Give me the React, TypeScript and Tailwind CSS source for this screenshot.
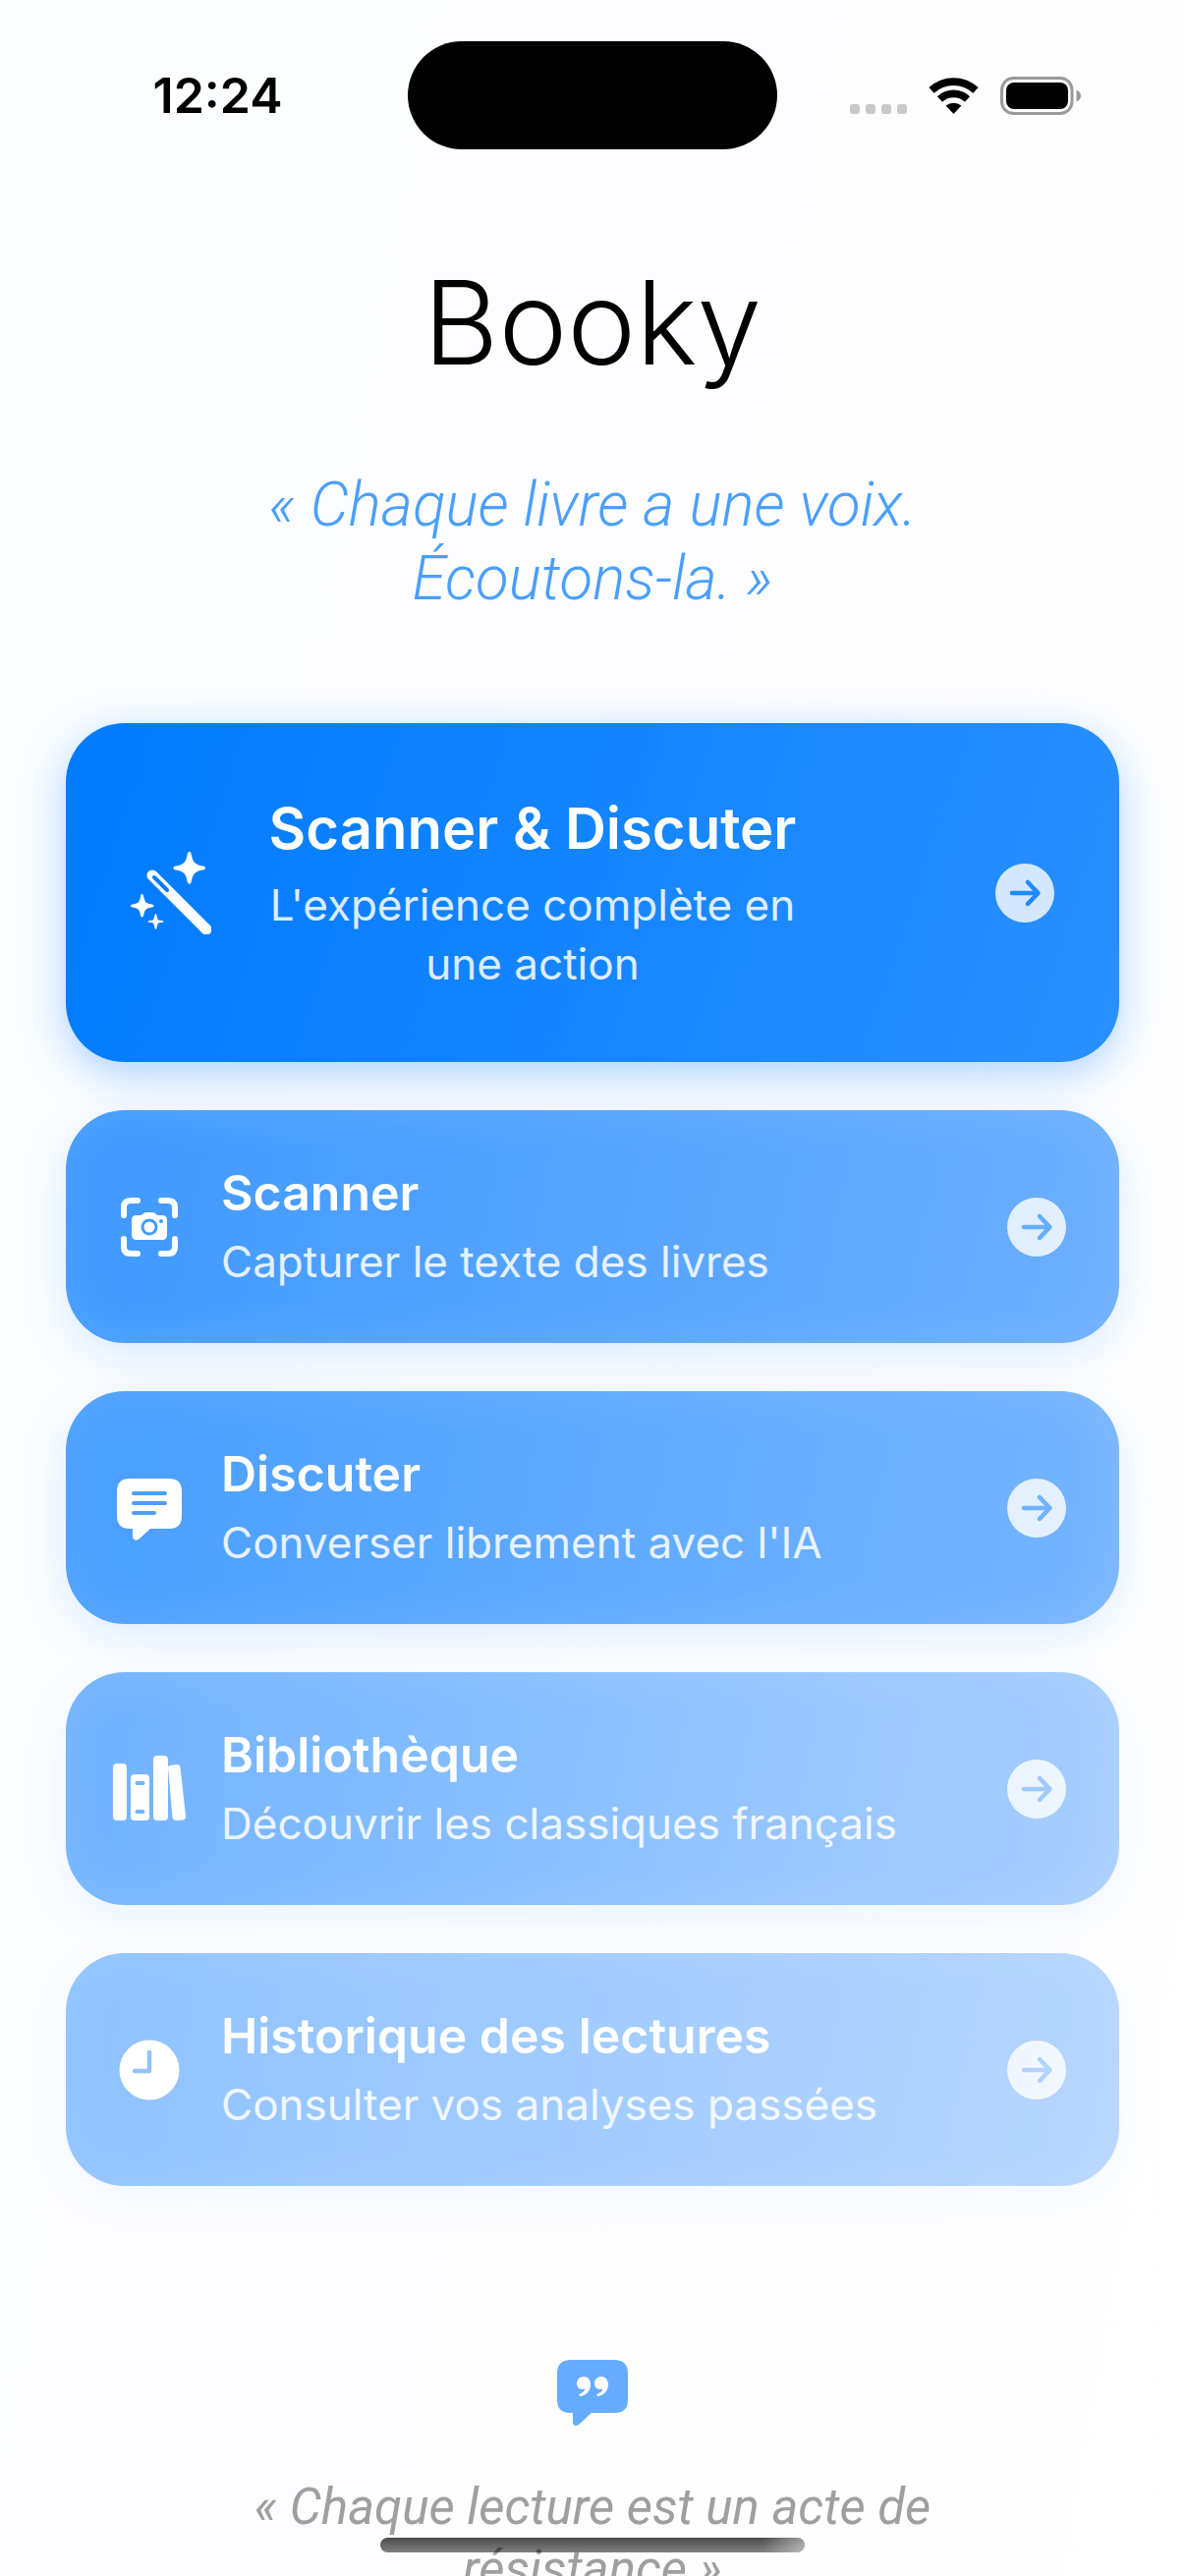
import React from 'react';

type IconProps = { className?: string };

interface MenuItem {
  title: string;
  subtitle: string;
  icon: React.ReactElement;
  tone: string;
  hole: string;
}

function WandIcon({ className }: IconProps) {
  return (
    <svg viewBox="0 0 82 84" className={className} fill="currentColor" aria-hidden="true">
      <path d="M22 24 L77 79" stroke="currentColor" strokeWidth="11" strokeLinecap="round" />
      <path d="M24 26 L37 39" stroke="#007bff" strokeWidth="4" strokeLinecap="round" />
      <path d="M59.700 0 C61 0 61.500 1 61.800 3 C63.500 11 65.500 13 73.500 14.500 C77 15.200 77 17.800 73.500 18.500 C65.500 20 63.500 22 61.800 30 C61.200 33.500 58.200 33.500 57.600 30 C56 22 54 20 46 18.500 C42.500 17.800 42.500 15.200 46 14.500 C54 13 56 11 57.600 3 C58 1 58.500 0 59.700 0Z" />
      <path d="M11.500 43 C12.500 43 13 44 13.200 45.500 C14.500 51.500 15.500 52.500 21.500 53.500 C24.200 54 24.200 56 21.500 56.500 C15.500 57.500 14.500 58.500 13.200 64.500 C12.700 67.200 10.500 67.200 10 64.500 C9 58.500 7.500 57.500 2 56.500 C-.7 56 -.7 54 2 53.500 C7.500 52.500 9 51.500 10 45.500 C10.300 44 10.500 43 11.500 43Z" />
      <path d="M25.500 63 C26.700 63 27 68.500 28 69.200 C29 70 33.500 69.800 33.500 71 C33.500 72.200 29 72 28 72.800 C27 73.500 26.700 79 25.500 79 C24.300 79 24 73.500 23 72.800 C22 72 17.500 72.200 17.500 71 C17.500 69.800 22 70 23 69.200 C24 68.500 24.300 63 25.500 63Z" />
    </svg>
  );
}

function ScanIcon({ className, hole }: IconProps & { hole: string }) {
  return (
    <svg viewBox="0 0 74 74" className={className} aria-hidden="true">
      <path
        d="M11 25 V17 Q11 10 18 10 H25 M49 10 H56 Q63 10 63 17 V25 M63 49 V57 Q63 64 56 64 H49 M25 64 H18 Q11 64 11 57 V49"
        fill="none"
        stroke="currentColor"
        strokeWidth="6"
        strokeLinecap="round"
      />
      <path
        d="M24 25 H27 Q29 25 30 24 Q31.500 22 34 22 H40 Q42.500 22 44 24 Q45 25 47 25 H50 Q55 25 55 30 V45 Q55 50 50 50 H24 Q19 50 19 45 V30 Q19 25 24 25Z"
        fill="currentColor"
      />
      <circle cx="37" cy="37" r="7" fill="none" stroke={hole} strokeWidth="3" />
      <circle cx="49" cy="31" r="2" fill={hole} />
    </svg>
  );
}

function BubbleIcon({ className, hole }: IconProps & { hole: string }) {
  return (
    <svg viewBox="0 0 74 74" className={className} aria-hidden="true">
      <path
        d="M17 7 H57 Q70 7 70 20 V45 Q70 58 57 58 H38 L27 68 Q22 72 20 67 V58 H17 Q4 58 4 45 V20 Q4 7 17 7Z"
        fill="currentColor"
      />
      <path d="M21 22 H53 M21 32 H53 M21 42 H42" stroke={hole} strokeWidth="4" strokeLinecap="round" />
    </svg>
  );
}

function BooksIcon({ className, hole }: IconProps & { hole: string }) {
  return (
    <svg viewBox="0 0 74 74" className={className} fill="currentColor" aria-hidden="true">
      <rect x="0" y="11" width="14" height="58" rx="4" />
      <rect x="18" y="22" width="19" height="47" rx="4" />
      <rect x="41" y="3" width="15" height="66" rx="4" />
      <path d="M56 15 Q56 13 58 13 L65 12 Q68 12 68.500 15 L74 65 Q74 68 71 68.500 L64 69 Q61 69 60.500 66Z" />
      <rect x="22.500" y="29" width="10" height="4" rx="2" fill={hole} />
      <rect x="22.500" y="58" width="10" height="4" rx="2" fill={hole} />
    </svg>
  );
}

function ClockIcon({ className, hole }: IconProps & { hole: string }) {
  return (
    <svg viewBox="0 0 74 74" className={className} aria-hidden="true">
      <circle cx="37" cy="37" r="30.500" fill="currentColor" />
      <path
        d="M37 19 V38 H22"
        fill="none"
        stroke={hole}
        strokeWidth="4.500"
        strokeLinecap="round"
        strokeLinejoin="round"
      />
    </svg>
  );
}

function ArrowBadge({ hole }: { hole: string }) {
  return (
    <svg viewBox="0 0 60 60" className="size-15 shrink-0" aria-hidden="true">
      <circle cx="30" cy="30" r="30" fill="#fff" fillOpacity="0.8" />
      <path
        d="M17 30 H43 M33 19 L43.500 30 L33 41"
        fill="none"
        stroke={hole}
        strokeWidth="4.500"
        strokeLinecap="round"
        strokeLinejoin="round"
      />
    </svg>
  );
}

function QuoteIcon({ className }: IconProps) {
  return (
    <svg viewBox="0 0 72 68" className={className} aria-hidden="true">
      <path
        d="M14 0 H58 Q72 0 72 14 V41 Q72 54 58 54 H35 L22 66 Q16 69 16 63 V54 H14 Q0 54 0 41 V14 Q0 0 14 0Z"
        fill="#65acff"
      />
      <path
        d="M27 17 C31 17 34 20 34 25 C34 31 30 36 24 37 C22 37 21.500 35.500 23.500 34.500 C26 33.500 28 31.500 28.500 29.500 C23 31 20 28 20 24 C20 20 23 17 27 17Z M45 17 C49 17 52 20 52 25 C52 31 48 36 42 37 C40 37 39.500 35.500 41.500 34.500 C44 33.500 46 31.500 46.500 29.500 C41 31 38 28 38 24 C38 20 41 17 45 17Z"
        fill="#fff"
      />
    </svg>
  );
}

function StatusBar() {
  return (
    <header className="grid grid-cols-[1fr_376px_1fr] pt-[42px]">
      <div className="flex h-[110px] items-center justify-center pl-7 text-[50px] font-semibold leading-none">
        12:24
      </div>
      <div className="h-[110px] rounded-full bg-black" />
      <div className="flex h-[110px] items-center justify-end pr-[106px]">
        <svg viewBox="0 0 236 40" className="h-10 w-[236px]" role="img" aria-label="Wi-Fi et batterie">
          <g fill="#c9c9cb">
            <rect x="1" y="29" width="10" height="10" rx="3" />
            <rect x="17" y="29" width="10" height="10" rx="3" />
            <rect x="33" y="29" width="10" height="10" rx="3" />
            <rect x="49" y="29" width="10" height="10" rx="3" />
          </g>
          <g fill="none" stroke="#000" strokeWidth="7.700">
            <path d="M84 14.900 A33 33 0 0 1 129 14.900" />
            <path d="M92.500 24 A20.500 20.500 0 0 1 120.500 24" />
          </g>
          <path d="M98.600 30.500 A12.300 12.300 0 0 1 114.400 30.500 L106.500 39Z" />
          <rect x="155.500" y="2.500" width="71.500" height="36" rx="12" fill="none" stroke="#9a9a9c" strokeWidth="3" />
          <rect x="160" y="7" width="63" height="27" rx="8" />
          <path d="M231.500 14.500 Q236 16.500 236 20.500 Q236 24.500 231.500 26.500Z" fill="#9a9a9c" />
        </svg>
      </div>
    </header>
  );
}

const items: MenuItem[] = [
  {
    title: 'Scanner',
    subtitle: 'Capturer le texte des livres',
    icon: <ScanIcon className="size-[74px] shrink-0" hole="#459bff" />,
    tone: 'from-[#3f99ff] to-[#6cafff] shadow-[0_12px_45px_rgba(0,122,255,0.15),inset_0_0_60px_rgba(255,255,255,0.1)]',
    hole: '#66adff',
  },
  {
    title: 'Discuter',
    subtitle: "Converser librement avec l'IA",
    icon: <BubbleIcon className="size-[74px] shrink-0" hole="#4c9fff" />,
    tone: 'from-[#489eff] to-[#76b5ff] shadow-[0_12px_45px_rgba(0,122,255,0.13),inset_0_0_60px_rgba(255,255,255,0.1)]',
    hole: '#70b2ff',
  },
  {
    title: 'Bibliothèque',
    subtitle: 'Découvrir les classiques français',
    icon: <BooksIcon className="size-[74px] shrink-0" hole="#74b5ff" />,
    tone: 'from-[#6fb2ff] to-[#a8cfff] shadow-[0_12px_45px_rgba(0,122,255,0.08),inset_0_0_60px_rgba(255,255,255,0.1)]',
    hole: '#9fcaff',
  },
  {
    title: 'Historique des lectures',
    subtitle: 'Consulter vos analyses passées',
    icon: <ClockIcon className="size-[74px] shrink-0" hole="#90c3ff" />,
    tone: 'from-[#8dc2ff] to-[#b7d6ff] shadow-[0_12px_45px_rgba(0,122,255,0.05),inset_0_0_60px_rgba(255,255,255,0.1)]',
    hole: '#b0d3ff',
  },
];

function HeroCard() {
  return (
    <button
      type="button"
      className="flex h-[345px] w-full items-center rounded-[60px] bg-linear-[108deg] from-[#007aff] to-[#2990ff] px-[66px] text-white shadow-[0_12px_45px_rgba(0,122,255,0.33)]"
    >
      <WandIcon className="h-[84px] w-[82px] shrink-0" />
      <span className="ml-12 flex w-[558px] flex-col text-center">
        <span className="text-[58px] font-semibold leading-[72px]">Scanner & Discuter</span>
        <span className="mt-3 text-[44px] leading-[60px] text-white/85">
          L'expérience complète en une action
        </span>
      </span>
      <span className="ml-auto">
        <ArrowBadge hole="#208bff" />
      </span>
    </button>
  );
}

function MenuCard({ item }: { item: MenuItem }) {
  return (
    <button
      type="button"
      className={`flex h-[237px] w-full items-center gap-9 rounded-[60px] bg-linear-[102deg] pl-12 pr-[54px] text-left text-white ${item.tone}`}
    >
      {item.icon}
      <span className="flex flex-1 flex-col">
        <span className="text-[50px] font-semibold leading-[60px]">{item.title}</span>
        <span className="mt-2.5 text-[44px] leading-[60px] text-white/85">{item.subtitle}</span>
      </span>
      <ArrowBadge hole={item.hole} />
    </button>
  );
}

export default function App(): React.ReactElement {
  return (
    <div className="relative h-screen overflow-hidden bg-linear-[100deg] from-[#fbfdff] via-[#fdfdff] to-white font-['Inter',sans-serif] text-black">
      <StatusBar />
      <main className="flex flex-col px-[67px]">
        <h1 className="mt-24 text-center text-[118px] font-light leading-[160px]">Booky</h1>
        <p className="mx-auto mt-[68px] max-w-[760px] text-center font-['Roboto',sans-serif] text-[62px] font-light italic leading-[75px] text-[#4a9fff]">
          « Chaque livre a une voix. Écoutons-la. »
        </p>
        <nav className="mt-[110px] flex flex-col gap-[49px]">
          <HeroCard />
          {items.map((item) => (
            <MenuCard key={item.title} item={item} />
          ))}
        </nav>
        <footer className="mt-[177px] flex flex-col items-center gap-[50px]">
          <QuoteIcon className="h-[68px] w-[72px]" />
          <p className="max-w-[760px] text-center font-['Roboto',sans-serif] text-[51px] italic leading-[63px] text-[#9f9fa2]">
            « Chaque lecture est un acte de résistance »
          </p>
        </footer>
      </main>
      {/* home indicator */}
      <div className="absolute bottom-6 left-1/2 h-[15px] w-[432px] -translate-x-1/2 overflow-hidden rounded-full bg-linear-to-b from-black/70 to-black/50">
        <div className="h-full bg-linear-to-r from-white/0 from-90% to-white/45" />
      </div>
    </div>
  );
}
